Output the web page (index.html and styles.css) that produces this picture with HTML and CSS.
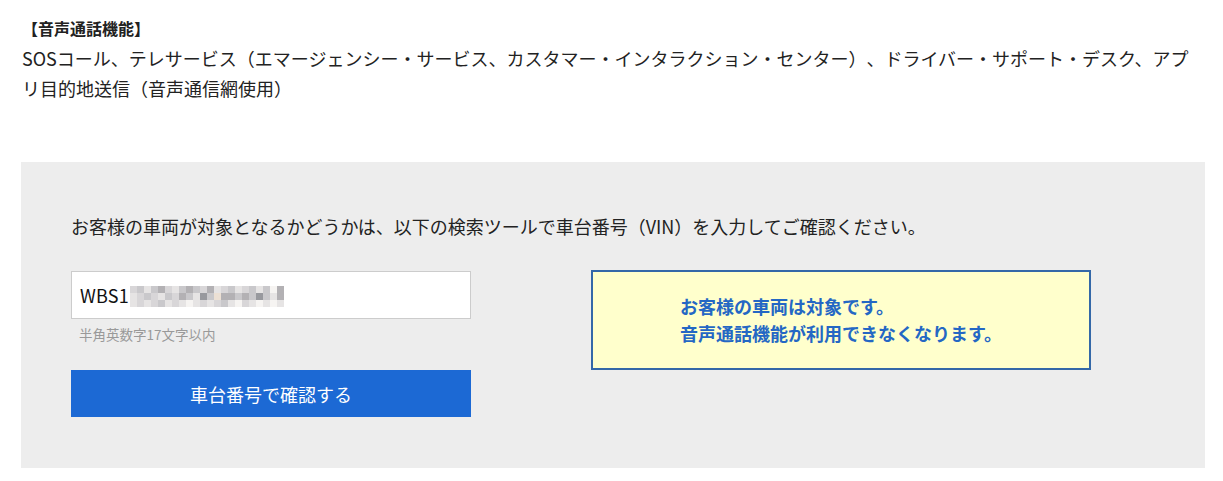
FILE: index.html
```html
<!DOCTYPE html>
<html lang="ja">
<head>
<meta charset="utf-8">
<title>音声通話機能</title>
<link rel="stylesheet" href="styles.css">
</head>
<body>
<div class="page">
  <section class="intro">
    <h3 class="intro-title">【音声通話機能】</h3>
    <p class="intro-text">SOSコール、テレサービス（エマージェンシー・サービス、カスタマー・インタラクション・センター）、ドライバー・サポート・デスク、アプリ目的地送信（音声通信網使用）</p>
  </section>

  <section class="checker">
    <p class="checker-lead">お客様の車両が対象となるかどうかは、以下の検索ツールで車台番号（VIN）を入力してご確認ください。</p>
    <div class="checker-row">
      <div class="form">
        <div class="vin-input">
          <span class="vin-text">WBS1</span>
          <span class="mosaic">
            <i class="m2"></i><i class="m3"></i><i class="m1"></i><i class="m3"></i><i class="m4"></i><i class="m2"></i><i class="m1"></i><i class="m3"></i><i class="m4"></i><i class="m3"></i><i class="m2"></i><i class="m4"></i><i class="m1"></i><i class="m2"></i><i class="m3"></i><i class="m1"></i><i class="m2"></i><i class="m3"></i><i class="m1"></i><i class="m3"></i><i class="m0"></i><i class="m4"></i>
            <i class="m1"></i><i class="m2"></i><i class="m3"></i><i class="m2"></i><i class="m1"></i><i class="m3"></i><i class="m2"></i><i class="m4"></i><i class="m3"></i><i class="m1"></i><i class="m5"></i><i class="m3"></i><i class="m6"></i><i class="m4"></i><i class="m4"></i><i class="m3"></i><i class="m4"></i><i class="m3"></i><i class="m5"></i><i class="m3"></i><i class="m1"></i><i class="m4"></i>
            <i class="m1"></i><i class="m2"></i><i class="m1"></i><i class="m2"></i><i class="m3"></i><i class="m1"></i><i class="m2"></i><i class="m1"></i><i class="m0"></i><i class="m1"></i><i class="m2"></i><i class="m1"></i><i class="m2"></i><i class="m3"></i><i class="m1"></i><i class="m0"></i><i class="m2"></i><i class="m1"></i><i class="m0"></i><i class="m1"></i><i class="m0"></i><i class="m1"></i>
          </span>
        </div>
        <p class="hint">半角英数字17文字以内</p>
        <button class="btn" type="button">車台番号で確認する</button>
      </div>
      <div class="result">
        <div class="result-inner">
          <p>お客様の車両は対象です。</p>
          <p>音声通話機能が利用できなくなります。</p>
        </div>
      </div>
    </div>
  </section>
</div>
</body>
</html>
```

FILE: styles.css
```css
* { box-sizing: border-box; }

body {
  margin: 0;
  background: #ffffff;
  color: #222222;
  font-family: "Noto Sans CJK JP", "Noto Sans", sans-serif;
  text-spacing-trim: space-all;
}

.page {
  padding: 15px 18px 0 21px;
}

.intro {
  padding-left: 1px;
}

.intro-title {
  margin: 0;
  font-size: 16px;
  line-height: 26px;
  font-weight: 700;
  color: #222;
}

.intro-text {
  margin: 2px 0 0;
  font-size: 18px;
  line-height: 30px;
  color: #222;
}

.checker {
  margin-top: 59px;
  background: #ededed;
  padding: 49px 50px 51px 50px;
}

.checker-lead {
  margin: 0;
  font-size: 18px;
  line-height: 30px;
  color: #222;
}

.checker-row {
  margin-top: 30px;
  display: flex;
  align-items: flex-start;
  gap: 120px;
}

.form {
  width: 400px;
}

.vin-input {
  height: 48px;
  background: #fff;
  border: 1px solid #cccccc;
  display: flex;
  align-items: center;
  padding-left: 8px;
}

.vin-text {
  font-size: 18px;
  color: #111;
  letter-spacing: 0.2px;
}

.mosaic {
  display: grid;
  grid-template-columns: repeat(22, 7px);
  grid-auto-rows: 7px;
  margin-left: 1px;
  margin-top: 2px;
}

.mosaic i { display: block; }
.m0 { background: #f6f4f2; }
.m1 { background: #e6e4e4; }
.m2 { background: #d8d6d8; }
.m3 { background: #c9c8cb; }
.m4 { background: #b3b1b4; }
.m5 { background: #98999e; }
.m6 { background: #ece0d4; }

.hint {
  margin: 5px 0 0 8px;
  font-size: 13.5px;
  line-height: 20px;
  color: #999999;
}

.btn {
  display: block;
  margin-top: 26px;
  width: 400px;
  height: 47px;
  border: none;
  background: #1c69d4;
  color: #ffffff;
  font-family: "Noto Sans CJK JP", "Noto Sans", sans-serif;
  font-size: 18px;
  cursor: pointer;
}

.result {
  width: 500px;
  height: 100px;
  margin-top: -1px;
  background: #ffffcc;
  border: 2px solid #3468a8;
  display: flex;
  align-items: center;
  justify-content: center;
}

.result-inner p {
  margin: 0;
  font-size: 18px;
  line-height: 27px;
  font-weight: 700;
  color: #2467c4;
}
```
